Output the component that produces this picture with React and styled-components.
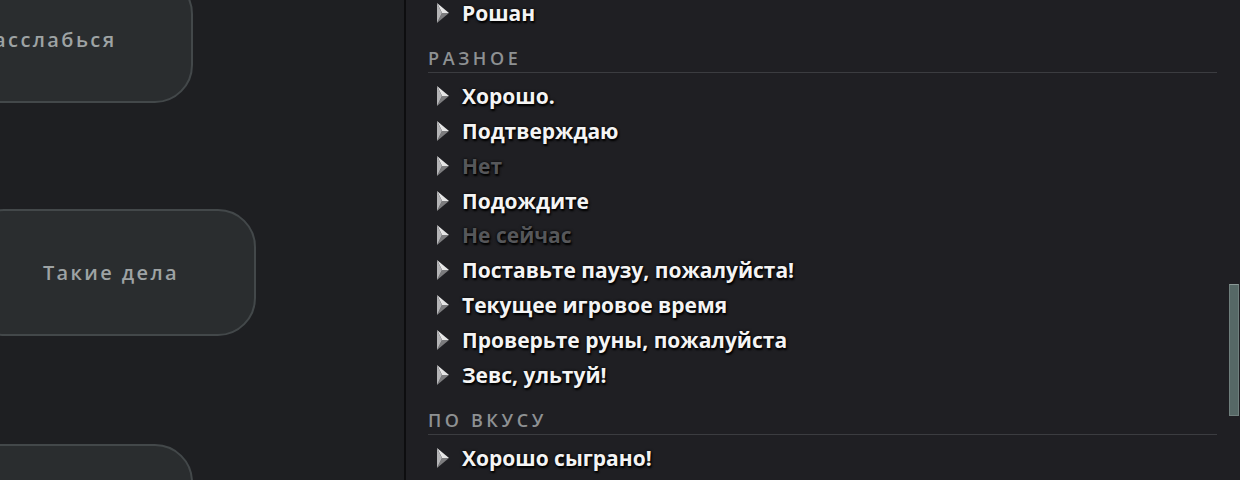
import React from "react";
import styled, { createGlobalStyle } from "styled-components";

const Global = createGlobalStyle`
  html, body { margin: 0; padding: 0; background: #1e1f22; }
  body { width: 1240px; height: 480px; overflow: hidden; }
  #root { width: 1240px; height: 480px; }
`;

const Page = styled.div`
  display: flex;
  width: 1240px;
  height: 480px;
  overflow: hidden;
  background: #1e1f22;
`;

const LeftColumn = styled.div`
  width: 404px;
  flex: none;
  display: flex;
  flex-direction: column;
  gap: 106px;
  overflow: hidden;
  border-right: 2px solid #0d0d0f;
`;

const WheelButton = styled.div`
  flex: none;
  box-sizing: border-box;
  width: 290px;
  height: 127px;
  margin-left: ${(p) => p.$offset}px;
  margin-top: ${(p) => p.$top || 0}px;
  border: 2px solid #43484a;
  border-radius: 38px;
  background: #2a2d2f;
  display: flex;
  align-items: center;
  justify-content: center;
  color: #9ea3a4;
  font-family: "Open Sans", "Noto Sans", sans-serif;
  font-weight: 600;
  font-size: 20px;
  letter-spacing: 2.4px;
`;

const Panel = styled.div`
  flex: 1;
  display: flex;
  background: #1f1f23;
  overflow: hidden;
`;

const List = styled.div`
  flex: 1;
  padding: 0 0 0 22px;
  margin-top: -4px;
  display: flex;
  flex-direction: column;
`;

const Track = styled.div`
  width: 22px;
  flex: none;
  display: flex;
  justify-content: flex-end;
  padding-right: 1px;
`;

const Thumb = styled.div`
  width: 10px;
  flex: none;
  box-sizing: border-box;
  background: #566866;
  border: 1px solid #6f7f7d;
  border-top-color: #8a9896;
`;

const Header = styled.div`
  flex: none;
  margin-top: ${(p) => (p.$first ? 16 : 17)}px;
  margin-bottom: 6px;
  padding-bottom: 3px;
  line-height: 22px;
  border-bottom: 1px solid #3b3c40;
  color: #8e9193;
  font-family: "Open Sans", "Noto Sans", sans-serif;
  font-weight: 600;
  font-size: 18px;
  letter-spacing: 3.6px;
`;

const Row = styled.div`
  flex: none;
  height: 34.8px;
  display: flex;
  align-items: center;
  gap: 12px;
  padding-left: 8px;
`;

const Label = styled.span`
  color: ${(p) => (p.$disabled ? "#56575a" : "#f4f4f4")};
  font-family: "Open Sans", "Noto Sans", sans-serif;
  font-weight: 700;
  font-size: 21px;
  white-space: nowrap;
  text-shadow: 1px 2px 2px #000, 0 0 3px #000;
`;

const Arrow = () => (
  <svg width="14" height="22" viewBox="0 0 14 22" style={{ flex: "none" }}>
    <polygon points="1,1 13,11 6,11" fill="#e6e6e6" />
    <polygon points="6,11 13,11 1,21" fill="#7c7c7e" />
    <polygon points="1,1 6,11 1,21" fill="#b4b4b6" />
  </svg>
);

const Item = ({ text, disabled }) => (
  <Row>
    <Arrow />
    <Label $disabled={disabled}>{text}</Label>
  </Row>
);

const sections = [
  { items: [{ text: "Рошан" }] },
  {
    title: "РАЗНОЕ",
    items: [
      { text: "Хорошо." },
      { text: "Подтверждаю" },
      { text: "Нет", disabled: true },
      { text: "Подождите" },
      { text: "Не сейчас", disabled: true },
      { text: "Поставьте паузу, пожалуйста!" },
      { text: "Текущее игровое время" },
      { text: "Проверьте руны, пожалуйста" },
      { text: "Зевс, ультуй!" },
    ],
  },
  { title: "ПО ВКУСУ", items: [{ text: "Хорошо сыграно!" }] },
];

export default function App() {
  return (
    <>
      <Global />
      <Page>
        <LeftColumn>
          <WheelButton $offset={-97} $top={-24}>Расслабься</WheelButton>
          <WheelButton $offset={-34}>Такие дела</WheelButton>
          <WheelButton $offset={-97} $top={2}>Удачи!</WheelButton>
        </LeftColumn>
        <Panel>
          <List>
            {sections.map((s, i) => (
              <React.Fragment key={i}>
                {s.title && <Header $first={i === 1}>{s.title}</Header>}
                {s.items.map((it, j) => (
                  <Item key={j} text={it.text} disabled={it.disabled} />
                ))}
              </React.Fragment>
            ))}
          </List>
          <Track>
            <Thumb style={{ marginTop: 284, height: 132 }} />
          </Track>
        </Panel>
      </Page>
    </>
  );
}
